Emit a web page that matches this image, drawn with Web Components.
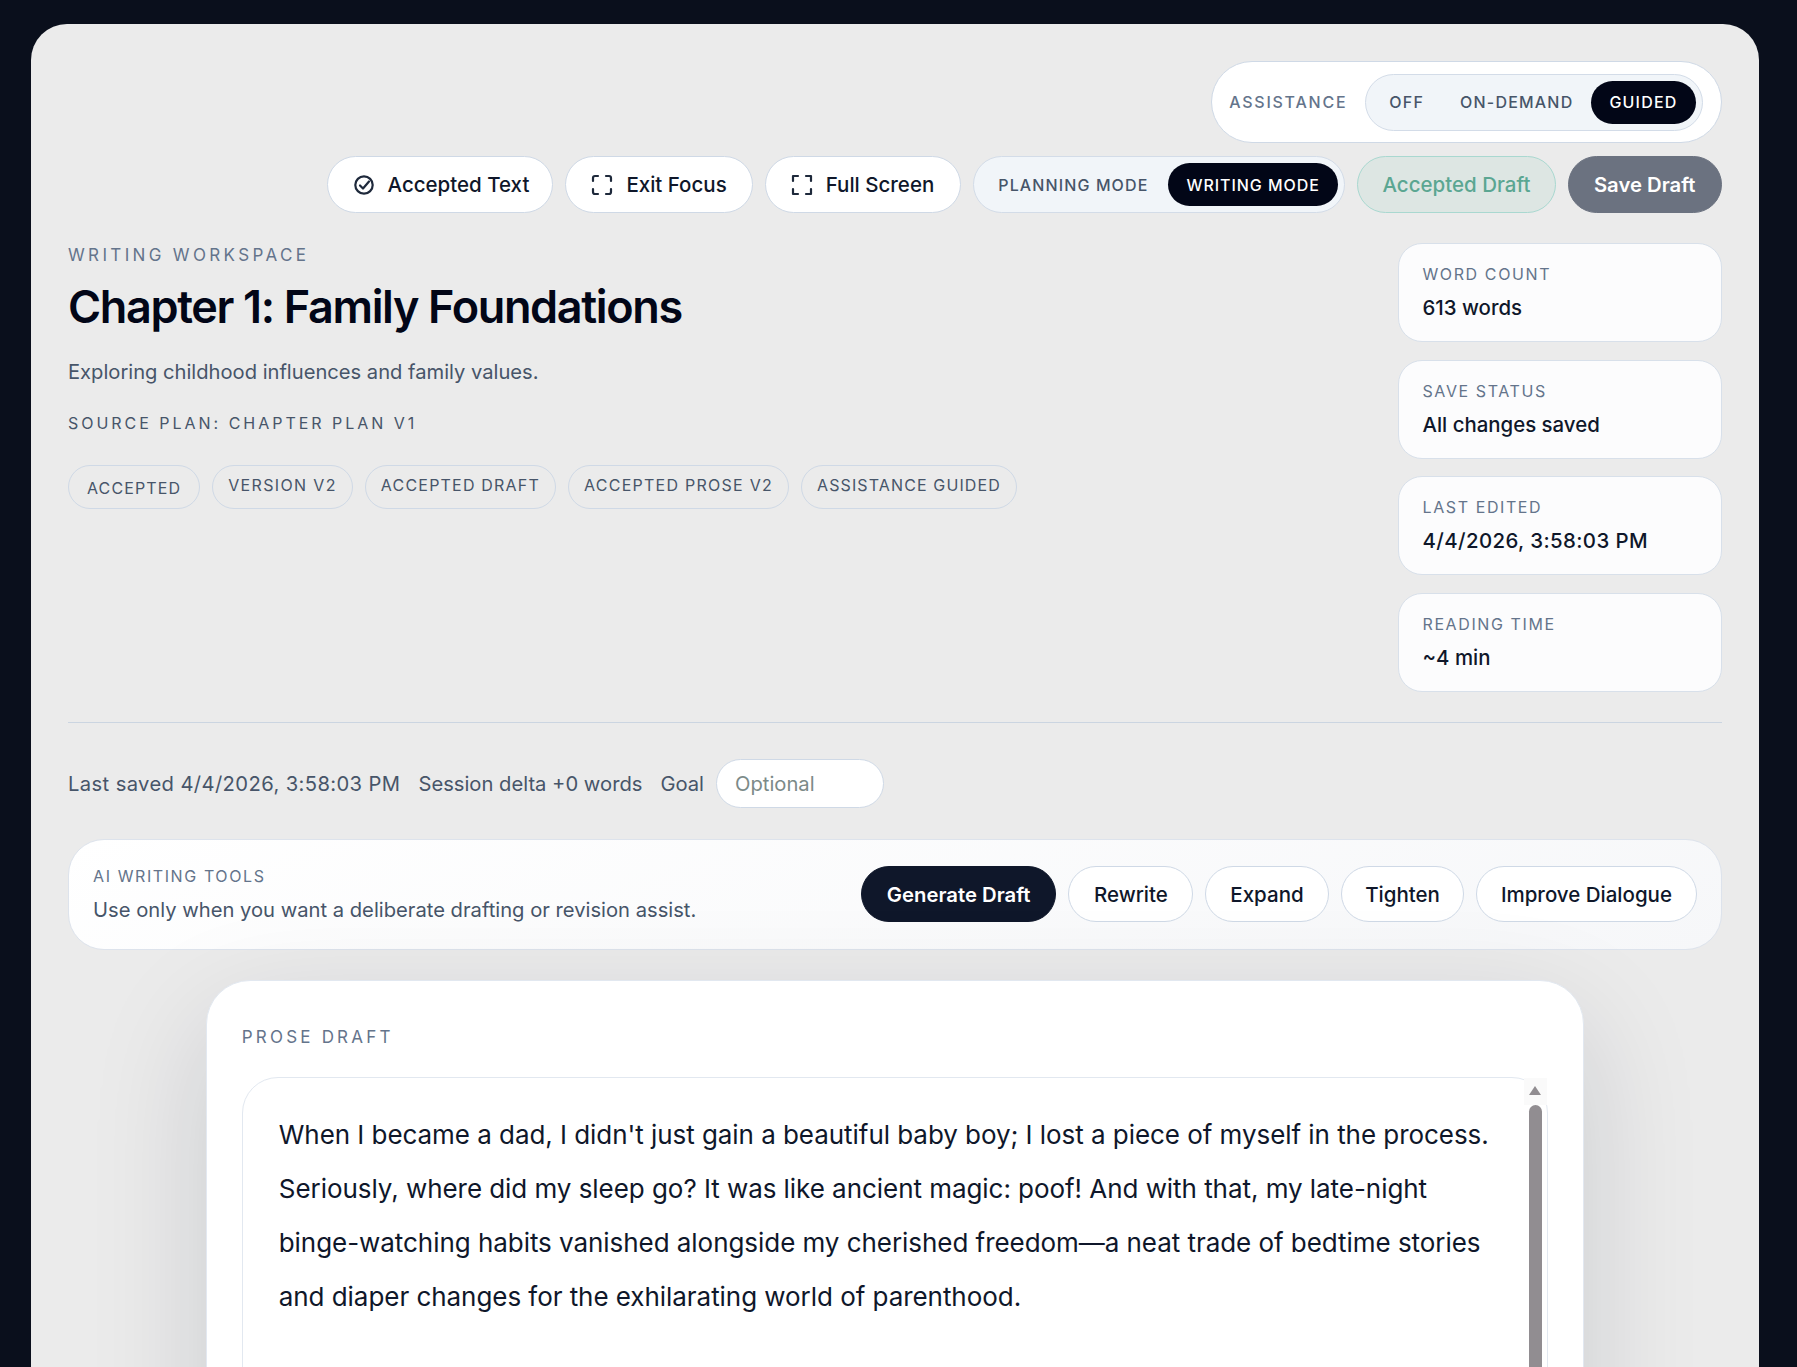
<!DOCTYPE html>
<html lang="en">
<head>
<meta charset="utf-8">
<title>Writing Workspace</title>
<style>
  html, body { margin: 0; height: 1367px; overflow: hidden; background: #0a0f1c; }
  body { font-family: Inter, "Liberation Sans", sans-serif; color: #0f172a; }
</style>
</head>
<body>
<writing-workspace>
  <workspace-toolbar slot="toolbar"></workspace-toolbar>
  <chapter-header slot="header"></chapter-header>
  <session-row slot="session"></session-row>
  <ai-tools slot="tools"></ai-tools>
  <prose-draft slot="draft">When I became a dad, I didn't just gain a beautiful baby boy; I lost a piece of myself in the process. Seriously, where did my sleep go? It was like ancient magic: poof! And with that, my late-night binge-watching habits vanished alongside my cherished freedom—a neat trade of bedtime stories and diaper changes for the exhilarating world of parenthood.</prose-draft>
</writing-workspace>
<script>
class WritingWorkspace extends HTMLElement {
  constructor() {
    super();
    this.attachShadow({ mode: "open" }).innerHTML = `
      <style>
        :host { display: block; padding: 24px 38px 0 31px; }
        .panel {
          display: flex;
          flex-direction: column;
          background: #ebebeb;
          border-radius: 36px 36px 0 0;
          padding: 37px 37.5px 0 37px;
          box-sizing: border-box;
        }
      </style>
      <section class="panel">
        <slot name="toolbar"></slot>
        <slot name="header"></slot>
        <slot name="session"></slot>
        <slot name="tools"></slot>
        <slot name="draft"></slot>
      </section>
    `;
  }
}

class PillButton extends HTMLElement {
  constructor() {
    super();
    this.attachShadow({ mode: "open" }).innerHTML = `
      <style>
        :host {
          display: inline-flex;
          align-items: center;
          justify-content: center;
          gap: 12px;
          height: 57px;
          box-sizing: border-box;
          padding: 0 24px;
          border: 1px solid #cfd9e6;
          border-radius: 999px;
          background: #fff;
          color: #0f172a;
          font-size: 20.5px;
          font-weight: 500;
          white-space: nowrap;
        }
        :host([small]) { height: 56px; }
        :host([variant="dark"]) { background: #0f172a; border-color: #0f172a; color: #fff; font-size: 20.3px; font-weight: 600; padding: 0 25px; }
        :host([variant="accepted"]) { background: #dde6e3; border-color: #a9d8d0; color: #5ba692; padding: 0 24.5px; }
        :host([variant="muted"]) { background: #6b7280; border-color: #6b7280; color: #fff; font-size: 20.3px; font-weight: 600; padding: 0 25px; }
      </style>
      <slot name="icon"></slot><slot></slot>
    `;
  }
}

class SegControl extends HTMLElement {
  constructor() {
    super();
    this.attachShadow({ mode: "open" }).innerHTML = `
      <style>
        :host {
          display: inline-flex;
          align-items: center;
          height: 57px;
          box-sizing: border-box;
          padding: 6px;
          border: 1px solid #d3dce8;
          border-radius: 999px;
          background: #f1f5f9;
        }
      </style>
      <slot></slot>
    `;
  }
}

class SegOption extends HTMLElement {
  constructor() {
    super();
    this.attachShadow({ mode: "open" }).innerHTML = `
      <style>
        :host {
          display: inline-flex;
          align-items: center;
          height: 43px;
          padding: 0 18px;
          border-radius: 999px;
          color: #475569;
          font-size: 16px;
          font-weight: 500;
          letter-spacing: .075em;
          white-space: nowrap;
        }
        :host([active]) { background: #020617; color: #fff; }
      </style>
      <slot></slot>
    `;
  }
}

class WorkspaceToolbar extends HTMLElement {
  constructor() {
    super();
    this.attachShadow({ mode: "open" }).innerHTML = `
      <style>
        :host { display: flex; flex-direction: column; align-items: flex-end; gap: 13px; }
        .assist {
          display: flex;
          align-items: center;
          gap: 18px;
          height: 82px;
          box-sizing: border-box;
          padding: 0 18px 0 17px;
          background: #fff;
          border: 1px solid #cfd9e6;
          border-radius: 999px;
        }
        .assist span { color: #64748b; font-size: 16px; letter-spacing: .11em; font-weight: 500; }
        .row { display: flex; gap: 12px; }
        svg { display: block; width: 24px; height: 24px; fill: none; stroke: #1e293b; stroke-width: 2.2; stroke-linecap: round; stroke-linejoin: round; }
      </style>
      <div class="assist">
        <span>ASSISTANCE</span>
        <seg-control>
          <seg-option style="padding-left:17px">OFF</seg-option>
          <seg-option>ON-DEMAND</seg-option>
          <seg-option active>GUIDED</seg-option>
        </seg-control>
      </div>
      <div class="row">
        <pill-button style="padding-right:23px">
          <svg slot="icon" viewBox="0 0 24 24"><circle cx="12" cy="12" r="8.7"/><path d="M8 12.5l3 3 6-7"/></svg>
          Accepted Text
        </pill-button>
        <pill-button style="padding-right:25px">
          <svg slot="icon" viewBox="0 0 24 24"><path d="M8 3H5a2 2 0 0 0-2 2v3M21 8V5a2 2 0 0 0-2-2h-3M3 16v3a2 2 0 0 0 2 2h3M16 21h3a2 2 0 0 0 2-2v-3"/></svg>
          Exit Focus
        </pill-button>
        <pill-button style="padding-right:26px">
          <svg slot="icon" viewBox="0 0 24 24"><path d="M8 3H3v5M21 8V3h-5M3 16v5h5M16 21h5v-5"/></svg>
          Full Screen
        </pill-button>
        <seg-control>
          <seg-option style="letter-spacing:.07em;padding-right:20px">PLANNING MODE</seg-option>
          <seg-option active style="letter-spacing:.06em">WRITING MODE</seg-option>
        </seg-control>
        <pill-button variant="accepted">Accepted Draft</pill-button>
        <pill-button variant="muted">Save Draft</pill-button>
      </div>
    `;
  }
}

class StatCard extends HTMLElement {
  constructor() {
    super();
    this.attachShadow({ mode: "open" }).innerHTML = `
      <style>
        :host {
          display: block;
          box-sizing: border-box;
          height: 99px;
          padding: 18px 24px;
          background: #fcfcfd;
          border: 1px solid #d8e0ea;
          border-radius: 24px;
        }
        .label { color: #64748b; font-size: 16px; letter-spacing: .1em; line-height: 24px; }
        .value { color: #0f172a; font-size: 20.4px; font-weight: 500; line-height: 28px; margin-top: 8px; white-space: nowrap; }
      </style>
      <div class="label">${this.getAttribute("label")}</div>
      <div class="value"><slot></slot></div>
    `;
  }
}

class StatusChip extends HTMLElement {
  constructor() {
    super();
    this.attachShadow({ mode: "open" }).innerHTML = `
      <style>
        :host {
          display: inline-flex;
          box-sizing: border-box;
          height: 44.5px;
          padding: 7px 15px 0;
          border: 1px solid #cfd9e6;
          border-radius: 999px;
          color: #475569;
          font-size: 16px;
          letter-spacing: .07em;
          line-height: 24px;
          white-space: nowrap;
        }
        :host([low]) { padding: 10px 18px 0; }
      </style>
      <slot></slot>
    `;
  }
}

class ChapterHeader extends HTMLElement {
  constructor() {
    super();
    this.attachShadow({ mode: "open" }).innerHTML = `
      <style>
        :host {
          display: grid;
          grid-template-columns: 1fr 324px;
          gap: 24px;
          margin-top: 30px;
          padding-bottom: 30px;
          border-bottom: 1px solid #cbd5e1;
        }
        .eyebrow { color: #64748b; font-size: 17px; letter-spacing: .197em; line-height: 24px; }
        h1 { margin: 14px 0 0; font-size: 45px; line-height: 52px; font-weight: 600; letter-spacing: -.03em; color: #020617; }
        p { margin: 24px 0 0; color: #475569; font-size: 20.15px; line-height: 30px; }
        .source { margin-top: 23.5px; color: #475569; font-size: 16px; letter-spacing: .186em; line-height: 24px; }
        .chips { display: flex; gap: 12px; margin-top: 30px; }
        .stats { display: flex; flex-direction: column; gap: 17.67px; }
      </style>
      <div>
        <div class="eyebrow">WRITING WORKSPACE</div>
        <h1>Chapter 1: Family Foundations</h1>
        <p>Exploring childhood influences and family values.</p>
        <div class="source">SOURCE PLAN: CHAPTER PLAN V1</div>
        <div class="chips">
          <status-chip low>ACCEPTED</status-chip>
          <status-chip style="letter-spacing:.085em">VERSION V2</status-chip>
          <status-chip style="letter-spacing:.075em">ACCEPTED DRAFT</status-chip>
          <status-chip style="letter-spacing:.0785em">ACCEPTED PROSE V2</status-chip>
          <status-chip>ASSISTANCE GUIDED</status-chip>
        </div>
      </div>
      <div class="stats">
        <stat-card label="WORD COUNT">613 words</stat-card>
        <stat-card label="SAVE STATUS">All changes saved</stat-card>
        <stat-card label="LAST EDITED"><span style="letter-spacing:.4px">4/4/2026, 3:58:03 PM</span></stat-card>
        <stat-card label="READING TIME">~4 min</stat-card>
      </div>
    `;
  }
}

class SessionRow extends HTMLElement {
  constructor() {
    super();
    this.attachShadow({ mode: "open" }).innerHTML = `
      <style>
        :host {
          display: flex;
          align-items: center;
          gap: 18px;
          margin-top: 36px;
          color: #475569;
          font-size: 20.2px;
        }
        .stamp { letter-spacing: .39px; }
        label { display: flex; align-items: center; gap: 12px; }
        input {
          width: 168px;
          height: 49px;
          box-sizing: border-box;
          padding: 0 18px;
          border: 1px solid #cfd9e6;
          border-radius: 999px;
          background: #fff;
          font: inherit;
        }
        input::placeholder { color: #7c8a88; opacity: 1; }
      </style>
      <span class="stamp">Last saved 4/4/2026, 3:58:03 PM</span>
      <span>Session delta +0 words</span>
      <label>Goal <input placeholder="Optional"></label>
    `;
  }
}

class AiTools extends HTMLElement {
  constructor() {
    super();
    this.attachShadow({ mode: "open" }).innerHTML = `
      <style>
        :host {
          display: flex;
          align-items: center;
          justify-content: space-between;
          height: 111px;
          box-sizing: border-box;
          margin-top: 31px;
          padding: 0 24px;
          border: 1px solid #dde3ec;
          border-radius: 36px;
          background: linear-gradient(160deg, #ffffff, #f6f7f9);
        }
        .label { color: #64748b; font-size: 16px; letter-spacing: .1em; line-height: 24px; }
        .hint { color: #475569; font-size: 20.2px; line-height: 28px; margin-top: 8px; }
        .actions { display: flex; gap: 12px; }
      </style>
      <div>
        <div class="label">AI WRITING TOOLS</div>
        <div class="hint">Use only when you want a deliberate drafting or revision assist.</div>
      </div>
      <div class="actions">
        <pill-button small variant="dark">Generate Draft</pill-button>
        <pill-button small style="padding:0 24.5px">Rewrite</pill-button>
        <pill-button small>Expand</pill-button>
        <pill-button small style="padding:0 23.5px">Tighten</pill-button>
        <pill-button small style="padding:0 23.5px">Improve Dialogue</pill-button>
      </div>
    `;
  }
}

class ProseDraft extends HTMLElement {
  constructor() {
    super();
    this.attachShadow({ mode: "open" }).innerHTML = `
      <style>
        :host {
          display: block;
          box-sizing: border-box;
          width: 1378px;
          height: 700px;
          margin: 30px auto 0;
          padding: 36px 35px;
          background: #fff;
          border: 1px solid #e2e8f0;
          border-radius: 44px;
          box-shadow: 0 40px 120px rgba(15, 23, 42, .14);
        }
        .label { color: #64748b; font-size: 17px; letter-spacing: .188em; line-height: 24px; margin-top: 8px; }
        .editor {
          position: relative;
          box-sizing: border-box;
          height: 600px;
          margin-top: 28px;
          padding: 30px 50px 0 36px;
          border: 1px solid #e2e8f0;
          border-radius: 36px;
          font-size: 26px;
          letter-spacing: -.05px;
          line-height: 54px;
          color: #0f172a;
        }
        /* scrollbar over the editor's right edge */
        .track { position: absolute; top: 0; right: 0; width: 23px; bottom: 0; }
        .cap { height: 27px; background: #fafafa; }
        .arrow { position: absolute; top: 8px; left: 5.5px; width: 0; height: 0; border: 6px solid transparent; border-top: 0; border-bottom: 9px solid #918d91; }
        .thumb { position: absolute; top: 27px; left: 5px; width: 13px; bottom: 0; background: #918d91; border-radius: 7px 7px 0 0; }
      </style>
      <div class="label">PROSE DRAFT</div>
      <div class="editor">
        <slot></slot>
        <div class="track"><div class="cap"></div><div class="arrow"></div><div class="thumb"></div></div>
      </div>
    `;
  }
}

customElements.define("pill-button", PillButton);
customElements.define("seg-option", SegOption);
customElements.define("seg-control", SegControl);
customElements.define("workspace-toolbar", WorkspaceToolbar);
customElements.define("stat-card", StatCard);
customElements.define("status-chip", StatusChip);
customElements.define("chapter-header", ChapterHeader);
customElements.define("session-row", SessionRow);
customElements.define("ai-tools", AiTools);
customElements.define("prose-draft", ProseDraft);
customElements.define("writing-workspace", WritingWorkspace);
</script>
</body>
</html>
